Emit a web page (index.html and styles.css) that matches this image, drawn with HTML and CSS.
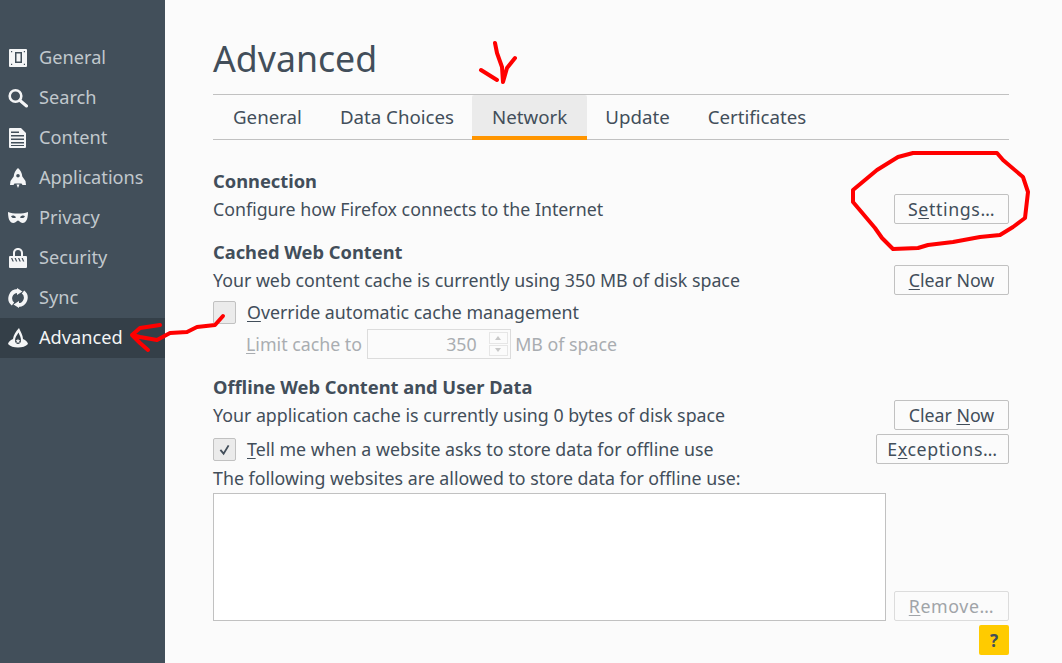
FILE: index.html
```html
<!DOCTYPE html>
<html lang="en">
<head>
<meta charset="utf-8">
<title>Advanced</title>
<link rel="stylesheet" href="styles.css">
</head>
<body>
<div class="app">
  <nav class="sidebar">
    <div class="nav-item"><svg class="nav-icon" viewBox="0 0 20 20"><path fill-rule="evenodd" d="M2 1h16a1 1 0 0 1 1 1v16a1 1 0 0 1-1 1H2a1 1 0 0 1-1-1V2a1 1 0 0 1 1-1zm5 3v11h7V4zm1.500 1.500h4v8h-4zM3 3v1.200h1.200V3zm12.800 0v1.200H17V3zM3 15.800V17h1.200v-1.200zm12.800 0V17H17v-1.200z"/></svg><span>General</span></div>
    <div class="nav-item"><svg class="nav-icon" viewBox="0 0 20 20"><circle cx="7.500" cy="8" r="5.800" fill="none" stroke="currentColor" stroke-width="2.600"/><path d="M12 12.500l6.500 5.500" fill="none" stroke="currentColor" stroke-width="3" stroke-linecap="round"/></svg><span>Search</span></div>
    <div class="nav-item"><svg class="nav-icon" viewBox="0 0 20 20"><path fill-rule="evenodd" d="M2 0h11l5 5v14a1 1 0 0 1-1 1H2a1 1 0 0 1-1-1V1a1 1 0 0 1 1-1zm1 7v1.500h13V7zm0 3.500V12h13v-1.500zM3 14v1.500h13V14zM3 17v1h13v-1zM3 3.500V5h8V3.500z"/></svg><span>Content</span></div>
    <div class="nav-item"><svg class="nav-icon" viewBox="0 0 20 20"><path fill-rule="evenodd" d="M10 0c2.500 2 4 5 4.300 8.500L17.500 13l.5 4h-3.500l-1-1.500h-7L5.500 17H2l.5-4 3.200-4.500C6 5 7.500 2 10 0zm0 6a1.800 1.800 0 1 0 0 3.600A1.800 1.800 0 0 0 10 6zM8.500 16.500h3L10 20z"/></svg><span>Applications</span></div>
    <div class="nav-item"><svg class="nav-icon" viewBox="0 0 20 20"><path fill-rule="evenodd" d="M0 4c3 1.500 6 1.500 10 1.500S17 5.500 20 4c0 5-1 11-5.500 11-2.500 0-3-2.500-4.500-2.500S8 15 5.500 15C1 15 0 9 0 4zm3 4.200c1 2 3.300 2.300 5 1.200-1-1.800-3.500-2.400-5-1.200zm14 0c-1.500-1.200-4-.6-5 1.200 1.700 1.100 4 .8 5-1.200z"/></svg><span>Privacy</span></div>
    <div class="nav-item"><svg class="nav-icon" viewBox="0 0 20 20"><path fill-rule="evenodd" d="M10 0c3 0 5 2.200 5 5v3h3a1 1 0 0 1 1 1v10a1 1 0 0 1-1 1H2a1 1 0 0 1-1-1V9a1 1 0 0 1 1-1h3V5c0-2.800 2-5 5-5zm0 2C8.200 2 7 3.300 7 5v3h6V5c0-1.700-1.200-3-3-3zM3 10l1.500 3.500h1.300L4.300 10zm3.500 0L8 13.500h1.300L7.800 10zm3.500 0l1.500 3.500h1.300L11.300 10zm3.500 0l1.500 3.500h1.300L14.800 10z"/></svg><span>Security</span></div>
    <div class="nav-item"><svg class="nav-icon" viewBox="0 0 20 20"><path d="M9.500 3A7.300 7.300 0 0 0 5 16" fill="none" stroke="currentColor" stroke-width="3.800"/><path d="M10.500 17A7.300 7.300 0 0 0 15 4" fill="none" stroke="currentColor" stroke-width="3.800"/><path d="M9 0l5.500 3.500L9 7zM11 20l-5.500-3.500L11 13z"/></svg><span>Sync</span></div>
    <div class="nav-item is-active"><svg class="nav-icon" viewBox="0 0 20 20"><path fill-rule="evenodd" d="M11 0C8 3 5.500 7 5 11 2 12 .5 14 0 16c2 2.500 6 3.500 10 3.500s8-1 10-3.500c-.5-2-2-4-5-5C15 7 12.500 4 11 0zM10.500 4.500C9 7 7 9.500 7 12.500 7 14.500 8.500 16 10 16s3-1.500 3-3.500c0-3-1.500-5.500-2.500-8zM10 10.500l.7 1.700 1.800.1-1.400 1.100.5 1.800-1.600-1-1.600 1 .5-1.800-1.400-1.100 1.800-.1z"/></svg><span>Advanced</span></div>
  </nav>
  <main class="content">
    <h1 class="page-title">Advanced</h1>
    <div class="tabs">
      <div class="tab">General</div>
      <div class="tab">Data Choices</div>
      <div class="tab is-selected">Network</div>
      <div class="tab">Update</div>
      <div class="tab">Certificates</div>
    </div>

    <section class="group group-first">
      <h2 class="group-title">Connection</h2>
      <div class="row">
        <span class="label">Configure how Firefox connects to the Internet</span>
        <button class="btn btn-dots"><span>S<u>e</u>ttings…</span></button>
      </div>
    </section>

    <section class="group">
      <h2 class="group-title">Cached Web Content</h2>
      <div class="row">
        <span class="label">Your web content cache is currently using 350 MB of disk space</span>
        <button class="btn"><span><u>C</u>lear Now</span></button>
      </div>
      <div class="check-row">
        <span class="checkbox"></span>
        <span class="label"><u>O</u>verride automatic cache management</span>
      </div>
      <div class="limit-row">
        <span class="label"><u>L</u>imit cache to</span>
        <span class="number-input">
          <span class="number-value label">350</span>
          <span class="spinner"><i class="spin-up"></i><i class="spin-down"></i></span>
        </span>
        <span class="label">MB of space</span>
      </div>
    </section>

    <section class="group">
      <h2 class="group-title">Offline Web Content and User Data</h2>
      <div class="row">
        <span class="label">Your application cache is currently using 0 bytes of disk space</span>
        <button class="btn"><span>Clear <u>N</u>ow</span></button>
      </div>
      <div class="row row-tight">
        <div class="check-inline">
          <span class="checkbox"><svg viewBox="0 0 23 23"><path d="M7 12l3.500 4L16 7" fill="none" stroke="#424e5a" stroke-width="2"/></svg></span>
          <span class="label"><u>T</u>ell me when a website asks to store data for offline use</span>
        </div>
        <button class="btn btn-wide btn-dots"><span>E<u>x</u>ceptions…</span></button>
      </div>
      <div class="list-caption">The following websites are allowed to store data for offline use:</div>
      <div class="list-row">
        <div class="listbox"></div>
        <button class="btn btn-disabled btn-dots"><span><u>R</u>emove…</span></button>
      </div>
    </section>

    <div class="help-row"><button class="help">?</button></div>
  </main>
</div>
<svg class="annotations" viewBox="0 0 1062 663">
  <path d="M913 153L997 153L1003 160L1023 177L1028 192L1025 218L1013 227L1000 235L980 237L953 242L928 245L918 248L893 249L882 238L875 228L853 202L853 190L877 170L898 157Z"/>
  <path d="M495 43L497 53L502 67L503 82M515 58L507 68L503 82M481 70L497 80"/>
  <path d="M223 316L215 325L197 327L187 332L170 333L157 340L140 337L132 335L140 328L160 325M132 335L140 343L148 350"/>
</svg>
</body>
</html>
```
FILE: styles.css
```css
* { box-sizing: border-box; }
html, body { margin: 0; padding: 0; height: 100%; overflow: hidden; }
body {
  font-family: "Noto Sans", "Open Sans", sans-serif;
  font-size: 17.8px;
  color: #424e5a;
  background: #fbfbfb;
}
u { text-underline-offset: 2px; }
.label { display: block; padding-bottom: 1px; }
.app { display: flex; height: 663px; }
.sidebar {
  width: 165px;
  flex: none;
  background: #424f5a;
  padding-top: 38px;
  color: #c1c8cd;
  font-size: 18.2px;
}
.nav-item {
  display: flex;
  align-items: center;
  height: 40px;
  padding-left: 8px;
  gap: 11px;
}
.nav-item span { padding-bottom: 3px; }
.nav-item.is-active { background: #343f48; color: #f2f4f5; }
.nav-icon { width: 20px; height: 20px; flex: none; fill: #f4f5f6; color: #f4f5f6; }
.content { flex: 1; padding: 0 53px 0 48px; display: flex; flex-direction: column; }
.page-title {
  margin: 0;
  height: 94px;
  padding-top: 34px;
  font-size: 35.7px;
  line-height: 48px;
  font-weight: 400;
}
.tabs {
  display: flex;
  height: 46px;
  padding-left: 1px;
  border-top: 1px solid #c1c1c1;
  border-bottom: 1px solid #c1c1c1;
  font-size: 18.7px;
}
.tab { padding: 0 19px; line-height: 44px; }
.tab.is-selected {
  background: #ebebeb;
  padding: 0 20px;
  margin: 0 -1px -1px;
  border-bottom: 4px solid #ff9500;
  border-radius: 2px 2px 0 0;
}
.group-first { margin-top: 28px; }
.group { margin-bottom: 15px; }
.group-title { margin: 0; height: 26px; font-size: 18.3px; font-weight: 700; line-height: 26px; }
.row { display: flex; justify-content: space-between; align-items: center; height: 30px; }
.row-tight { margin-top: 4px; }
.btn {
  font: inherit;
  color: inherit;
  width: 115px;
  height: 30px;
  padding: 0;
  background: #fbfbfb;
  border: 1px solid #c1c1c1;
  border-radius: 2px;
  flex: none;
}
.btn-dots { letter-spacing: .6px; }
.btn-wide { width: 133px; }
.btn-disabled { color: #a0a4a8; border-color: #dcdcdc; }
.checkbox {
  display: block;
  width: 23px;
  height: 23px;
  background: #ebebeb;
  border: 1px solid #c1c1c1;
  border-radius: 2px;
  flex: none;
}
.checkbox svg { display: block; width: 21px; height: 21px; }
.check-row { display: flex; align-items: center; gap: 11px; height: 23px; margin-top: 6px; }
.check-inline { display: flex; align-items: center; gap: 11px; }
.limit-row {
  display: flex;
  align-items: center;
  height: 30px;
  margin-top: 5px;
  padding-left: 33px;
  gap: 4.6px;
  color: #a9adb1;
}
.number-input {
  display: flex;
  align-items: center;
  justify-content: flex-end;
  width: 144px;
  height: 30px;
  border: 1px solid #dcdcdc;
  padding-right: 2px;
  background: #fbfbfb;
}
.number-value { margin-right: 12px; }
.spinner { display: flex; flex-direction: column; width: 19px; height: 24px; gap: 1px; }
.spinner i { flex: 1; border: 1px solid #e6e6e6; display: flex; align-items: center; justify-content: center; }
.spin-up::after, .spin-down::after { content: ""; border: 3px solid transparent; }
.spin-up::after { border-bottom: 4px solid #c8c8c8; border-top: 0; }
.spin-down::after { border-top: 4px solid #c8c8c8; border-bottom: 0; }
.list-caption { margin-top: 1px; height: 28px; line-height: 26px; }
.list-row { display: flex; align-items: flex-end; justify-content: space-between; }
.listbox { width: 673px; height: 128px; background: #fff; border: 1px solid #c1c1c1; }
.help-row { display: flex; justify-content: flex-end; margin-top: -11px; }
.help {
  width: 30px;
  height: 30px;
  padding: 0;
  border: 0;
  border-radius: 2px;
  background: #ffcb00;
  color: #424e5a;
  font: 700 17px "Noto Sans", sans-serif;
}
.annotations { position: absolute; left: 0; top: 0; width: 1062px; height: 663px; pointer-events: none; }
.annotations path { fill: none; stroke: #f00; stroke-width: 4; stroke-linejoin: round; stroke-linecap: round; }
```
